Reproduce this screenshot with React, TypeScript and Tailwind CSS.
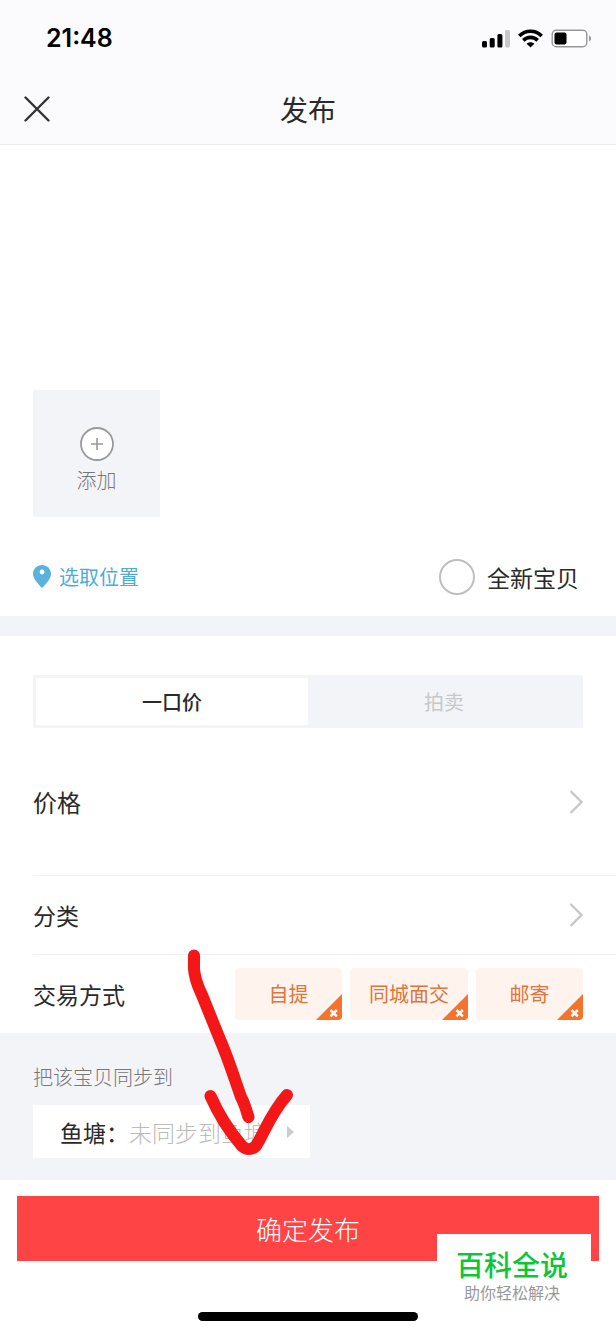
import React from "react";

const tradeModes = ["自提", "同城面交", "邮寄"];

const StatusBar = () => (
  <div className="flex h-[76px] items-center justify-between pl-[46px] pr-6">
    <span className="font-['Inter','Liberation_Sans',sans-serif] text-[25px] font-semibold leading-8 text-black">21:48</span>
    <div className="flex items-center gap-2">
      <svg width="28" height="19" viewBox="0 0 28 19" aria-hidden="true">
        <rect x="0" y="12" width="5" height="6.500" rx="1.5" />
        <rect x="7.7" y="9" width="5" height="9.500" rx="1.5" />
        <rect x="15.4" y="5" width="5" height="13.500" rx="1.5" />
        <rect x="23" y="1" width="5" height="17.500" rx="1.5" fill="#c8c8ca" />
      </svg>
      <svg width="25" height="19" viewBox="0 0 25 19" fill="none" stroke="#000" strokeWidth="3.6" aria-hidden="true">
        <path d="M1.300 7C7.500 .6 17.500 .6 23.700 7" />
        <path d="M5.300 11.400C9.400 7.400 15.600 7.400 19.700 11.400" />
        <path d="M12.500 18.500 8.700 14.800C10.900 12.800 14.100 12.800 16.300 14.800Z" fill="#000" stroke="none" />
      </svg>
      <svg width="41" height="19" viewBox="0 0 41 19" aria-hidden="true">
        <rect x="1.2" y="1.2" width="34.600" height="16.6" rx="4" fill="#fff" stroke="#98989a" strokeWidth="1.4" />
        <rect x="3.500" y="3.5" width="12" height="12" rx="2" />
        <path d="M38 6.5C40.7 7.5 40.7 11.5 38 12.5Z" fill="#98989a" />
      </svg>
    </div>
  </div>
);

const Chevron = () => (
  <svg width="14" height="24" viewBox="0 0 14 24" fill="none" stroke="#c8c8c8" strokeWidth="2.4" aria-hidden="true">
    <path d="M1.5 1 12.5 12 1.5 23" />
  </svg>
);

const TradeTag = ({ label }: { label: string }) => (
  <button
    type="button"
    className="relative h-[52px] min-w-[107px] overflow-hidden rounded bg-[#fff3ed] px-[19px] text-[20px] leading-7 text-[#e2733a]"
  >
    {label}
    <svg className="absolute bottom-0 right-0" width="26" height="26" viewBox="0 0 26 26" aria-hidden="true">
      <path d="M26 0V26H0Z" fill="#f6722f" />
      <path d="M14.5 16 20.8 22.3M20.8 16 14.5 22.3" stroke="#fff" strokeWidth="2.5" />
    </svg>
  </button>
);

// Hand-drawn arrow pointing at the confirm button
const HintArrow = () => (
  <svg
    className="pointer-events-none absolute -top-[93px] left-[180px]"
    width="120"
    height="230"
    viewBox="180 940 120 230"
    fill="none"
    stroke="#f31717"
    strokeWidth="12"
    strokeLinecap="round"
    strokeLinejoin="round"
    aria-hidden="true"
  >
    <path d="M194 955.500V969C195 981 198 986 202 995L221 1042C228 1058 235 1080 241 1097C245 1104 246 1110 248.500 1117" />
    <path d="M210.500 1096C218 1113 229 1131 242 1146C246 1150 252 1150 256 1146C265 1131 271 1113 287 1095" />
  </svg>
);

const App = () => {
  return (
    <div className="relative min-h-screen bg-white font-['Noto_Sans_CJK_SC',sans-serif] text-[#2a2a2a]">
      <header className="border-b border-[#eeeef0] bg-[#fbfbfd]">
        <StatusBar />
        <div className="grid h-[68px] grid-cols-3 items-center px-6 pb-0.5">
          <button type="button" aria-label="关闭" className="w-[26px]">
            <svg width="26" height="26" viewBox="0 0 26 26" stroke="#333" strokeWidth="2.4" strokeLinecap="round" aria-hidden="true">
              <path d="M1.500 1.500 24.500 24.500M24.500 1.500 1.500 24.500" />
            </svg>
          </button>
          <h1 className="text-center text-[28px] leading-10">发布</h1>
        </div>
      </header>

      <main>
        <section>
          <textarea aria-label="宝贝描述" className="block h-[245px] w-full resize-none px-8 py-6 text-[23px] outline-none" />
          <button
            type="button"
            className="ml-[33px] flex h-[127px] w-[127px] flex-col items-center gap-0.5 bg-[#f3f4f8] pt-9 text-[20px] font-light leading-8 text-[#777]"
          >
            <svg width="36" height="36" viewBox="0 0 36 36" fill="none" stroke="#999" aria-hidden="true">
              <circle cx="18" cy="18" r="16" fill="#fff" strokeWidth="1.8" />
              <path d="M12 18H24M18 12V24" strokeWidth="1.6" />
            </svg>
            添加
          </button>
          <div className="flex h-[99px] items-center justify-between pl-[33px] pr-[37px] pt-5">
            <button type="button" className="flex items-center gap-2 text-[20px] leading-8 text-[#4eacd8]">
              <svg width="18" height="23" viewBox="0 0 18 23" aria-hidden="true">
                <path d="M9 0C4 0 0 4 0 8.800C0 14 5 19 9 23C13 19 18 14 18 8.800C18 4 14 0 9 0Z" fill="#5bb2dc" />
                <circle cx="9" cy="7" r="2.400" fill="#fff" />
              </svg>
              选取位置
            </button>
            <label className="flex items-center gap-3 text-[23px] leading-9">
              <input
                type="radio"
                name="condition"
                className="h-9 w-9 appearance-none rounded-full border-2 border-[#bfbfbf] bg-white checked:bg-[#ff4444]"
              />
              全新宝贝
            </label>
          </div>
        </section>

        <div className="h-5 bg-[#f3f4f8]"></div>

        <section className="pl-[33px]">
          <div className="mr-[33px] pt-[39px]">
            <div className="grid h-[53px] grid-cols-2 bg-[#f3f4f8] p-[3px] text-[20px] leading-7">
              <button type="button" className="bg-white font-medium">一口价</button>
              <button type="button" className="text-[#c8c8ca]">拍卖</button>
            </div>
          </div>
          <button type="button" className="flex h-[148px] w-full items-center justify-between border-b border-[#f1f1f3] pr-[33px] text-[24px] leading-9">
            价格
            <Chevron />
          </button>
          <button type="button" className="flex h-[79px] w-full items-center justify-between border-b border-[#f1f1f3] pr-[33px] text-[23px] leading-9">
            分类
            <Chevron />
          </button>
          <div className="flex h-[78px] items-center justify-between pr-[33px]">
            <span className="text-[23px] leading-9">交易方式</span>
            <div className="flex gap-2">
              {tradeModes.map((mode) => (
                <TradeTag key={mode} label={mode} />
              ))}
            </div>
          </div>
        </section>

        <section className="relative h-[147px] bg-[#f3f4f8] pl-[33px] pt-7">
          <p className="text-[20px] font-light leading-8 text-[#777]">把该宝贝同步到</p>
          <button type="button" className="mt-3 flex h-[53px] w-[277px] items-center bg-white pl-[27px] text-[23px] leading-9">
            鱼塘：
            <span className="font-light text-[#bbb]">未同步到鱼塘</span>
            <svg className="ml-5" width="7" height="12" viewBox="0 0 7 12" fill="#ccc" aria-hidden="true">
              <path d="M0 0 7 6 0 12Z" />
            </svg>
          </button>
          <HintArrow />
        </section>
      </main>

      <footer className="px-[17px] pb-[13px] pt-4">
        <button type="button" className="block h-[65px] w-full bg-[#ff4445] text-[26px] font-light leading-9 text-white">
          确定发布
        </button>
        <div className="mx-auto mt-[51px] h-[9px] w-[220px] rounded-full bg-black"></div>
      </footer>

      <div className="absolute bottom-[23px] right-[25px] h-[77px] w-[154px] bg-white pr-1 pt-3 text-center">
        <p className="text-[28px] font-medium leading-9 text-[#0bc737]">百科全说</p>
        <p className="text-[16px] leading-5 text-[#999]">助你轻松解决</p>
      </div>
    </div>
  );
};

export default App;
